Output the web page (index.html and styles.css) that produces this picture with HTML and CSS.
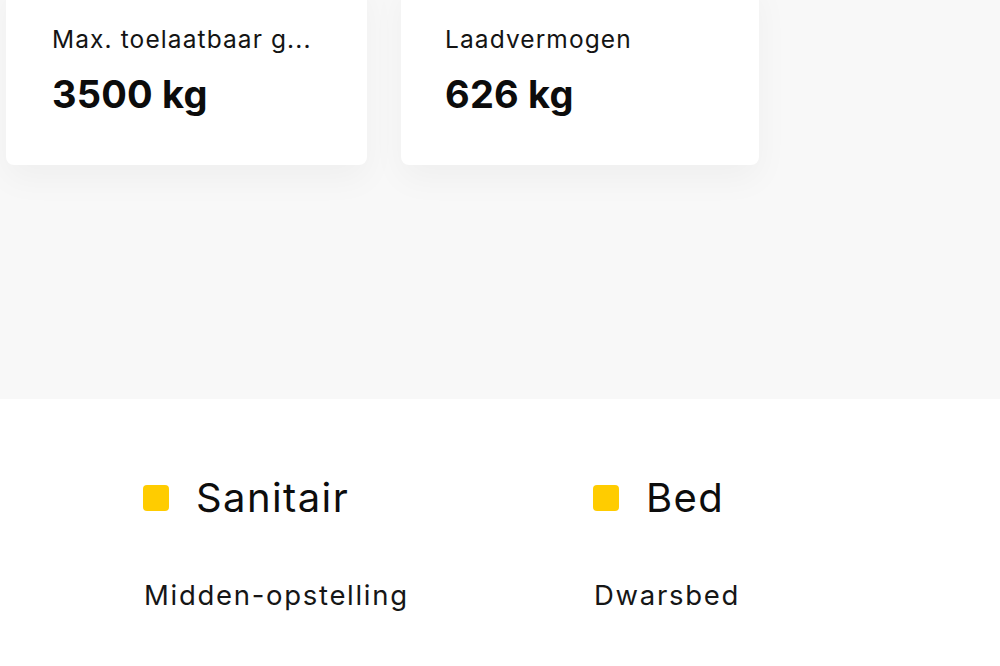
FILE: index.html
```html
<!DOCTYPE html>
<html lang="nl">
<head>
<meta charset="utf-8">
<link rel="stylesheet" href="styles.css">
</head>
<body>
<section class="specs">
  <div class="cards">
    <div class="card">
      <div class="card-label">Max. toelaatbaar g...</div>
      <div class="card-value">3500 kg</div>
    </div>
    <div class="card card-second">
      <div class="card-label">Laadvermogen</div>
      <div class="card-value">626 kg</div>
    </div>
  </div>
</section>
<section class="features">
  <div class="feature">
    <h2 class="feature-title"><span class="dot"></span>Sanitair</h2>
    <p class="feature-text">Midden-opstelling</p>
  </div>
  <div class="feature">
    <h2 class="feature-title"><span class="dot"></span>Bed</h2>
    <p class="feature-text">Dwarsbed</p>
  </div>
</section>
</body>
</html>
```
FILE: styles.css
```css
html, body {
  margin: 0;
  padding: 0;
}
body {
  width: 1000px;
  height: 666px;
  overflow: hidden;
  background: #ffffff;
  font-family: Inter, Lato, "Noto Sans", "Liberation Sans", sans-serif;
  color: #111111;
}
.specs {
  background: #f8f8f8;
  height: 399px;
  overflow: hidden;
}
.cards {
  display: flex;
  gap: 34px;
  padding-left: 6px;
  margin-top: -20px;
}
.card {
  width: 361px;
  height: 185px;
  box-sizing: border-box;
  background: #ffffff;
  border-radius: 8px;
  box-shadow: 0 14px 34px rgba(0, 0, 0, 0.04);
  padding: 43px 0 0 46px;
  flex-shrink: 0;
}
.card-second {
  width: 358px;
  padding-left: 44px;
}
.card-label {
  font-size: 24.5px;
  line-height: 32px;
  letter-spacing: 1.1px;
  color: #141414;
}
.card-value {
  margin-top: 17px;
  font-size: 38px;
  line-height: 44px;
  font-weight: 700;
  letter-spacing: 0.2px;
  color: #0c0c0c;
}
.features {
  display: flex;
  padding: 73px 0 0 143px;
}
.feature {
  width: 450px;
  flex-shrink: 0;
}
.feature-title {
  margin: 0;
  display: flex;
  align-items: center;
  gap: 27px;
  font-size: 40px;
  line-height: 52px;
  font-weight: 400;
  letter-spacing: 1.4px;
  color: #0d0d0d;
}
.dot {
  width: 26px;
  height: 26px;
  border-radius: 4px;
  background: #ffcc00;
  flex-shrink: 0;
}
.feature-text {
  margin: 52px 0 0 1px;
  font-size: 27.5px;
  line-height: 38px;
  letter-spacing: 1.7px;
  color: #161616;
}
```
